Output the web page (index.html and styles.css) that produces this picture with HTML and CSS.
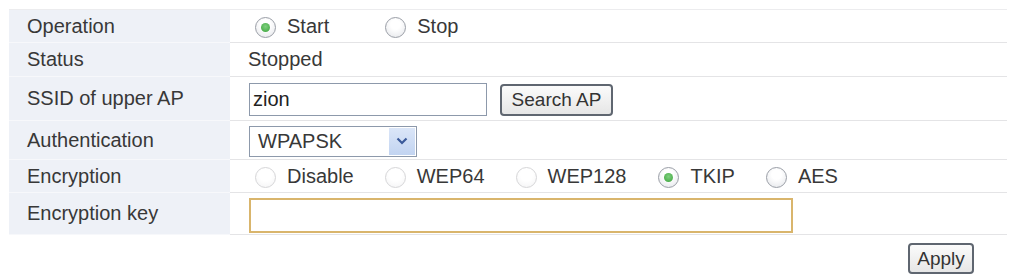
FILE: index.html
```html
<!DOCTYPE html>
<html lang="en">
<head>
    <meta charset="UTF-8">
    <meta name="viewport" content="width=device-width, initial-scale=1.0">
    <title>Repeater Settings</title>
    <link rel="stylesheet" href="styles.css">
</head>
<body>
    <div class="settings">
        <div class="row row-op">
            <div class="label">Operation</div>
            <div class="value">
                <label class="option option-wide"><input type="radio" name="op" checked> Start</label>
                <label class="option"><input type="radio" name="op"> Stop</label>
            </div>
        </div>
        <div class="row row-status">
            <div class="label">Status</div>
            <div class="value"><span class="status-text">Stopped</span></div>
        </div>
        <div class="row row-ssid">
            <div class="label">SSID of upper AP</div>
            <div class="value">
                <input class="text-input ssid-input" type="text" value="zion">
                <button class="btn search-btn">Search AP</button>
            </div>
        </div>
        <div class="row row-auth">
            <div class="label">Authentication</div>
            <div class="value">
                <div class="select">
                    <span class="select-text">WPAPSK</span>
                    <span class="select-arrow">
                        <svg width="12" height="8" viewBox="0 0 12 8"><path d="M1.5 1.5 L6 6 L10.5 1.5" fill="none" stroke="#3b5a9a" stroke-width="2.2"/></svg>
                    </span>
                </div>
            </div>
        </div>
        <div class="row row-enc">
            <div class="label">Encryption</div>
            <div class="value">
                <label class="option"><input type="radio" name="enc" disabled> Disable</label>
                <label class="option"><input type="radio" name="enc" disabled> WEP64</label>
                <label class="option"><input type="radio" name="enc" disabled> WEP128</label>
                <label class="option"><input type="radio" name="enc" checked> TKIP</label>
                <label class="option"><input type="radio" name="enc"> AES</label>
            </div>
        </div>
        <div class="row row-key">
            <div class="label">Encryption key</div>
            <div class="value">
                <input class="text-input key-input" type="text" value="">
            </div>
        </div>
    </div>
    <div class="actions">
        <button class="btn apply-btn">Apply</button>
    </div>
</body>
</html>
```

FILE: styles.css
```css
body {
    font-family: "Liberation Sans", Arial, sans-serif;
    font-size: 20px;
    color: #383838;
    margin: 0;
    padding: 9px 10px 0 9px;
    background: #fff;
}

.settings {
    border-top: 1px solid #ececee;
}

.row {
    display: grid;
    grid-template-columns: 221px 1fr;
}

.row-op { height: 33px; }
.row-status { height: 34px; }
.row-ssid { height: 44px; }
.row-auth { height: 39px; }
.row-enc { height: 33px; }
.row-key { height: 42px; }

.label {
    background-color: #eef1f7;
    border-bottom: 1px solid #f7f8fb;
    padding-left: 18px;
    display: flex;
    align-items: center;
}

.value {
    display: flex;
    align-items: center;
    padding-left: 19px;
    border-bottom: 1px solid #e4e4e6;
}

.row-op .value,
.row-enc .value {
    padding-left: 25px;
}

.status-text {
    margin-left: -1px;
}

.option {
    display: flex;
    align-items: center;
    margin-right: 31px;
    line-height: 1;
}

.option-wide {
    margin-right: 56px;
}

.option input {
    appearance: none;
    -webkit-appearance: none;
    width: 21px;
    height: 21px;
    margin: 0 11px 0 0;
    border: 1px solid #9a9ea6;
    border-radius: 50%;
    background: radial-gradient(circle at 50% 35%, #ffffff 30%, #e2e4e8 100%);
    position: relative;
    top: 1px;
}

.option input:checked::after {
    content: "";
    position: absolute;
    left: 5px;
    top: 5px;
    width: 9px;
    height: 9px;
    border-radius: 50%;
    background: radial-gradient(circle at 50% 40%, #7fd07f 0%, #3aa33a 100%);
}

.option input:disabled {
    border-color: #d6d6d8;
    background: radial-gradient(circle at 50% 35%, #ffffff 40%, #f2f2f3 100%);
}

.row-enc .option:nth-child(3) {
    margin-right: 32px;
}

.text-input {
    font-family: inherit;
    font-size: 20px;
    color: #222;
    box-sizing: border-box;
    margin: 0;
    padding: 0 3px;
    outline: none;
}

.ssid-input {
    width: 238px;
    height: 33px;
    border: 1px solid #8d99ab;
    margin-top: 2px;
}

.key-input {
    width: 544px;
    height: 35px;
    border: 2px solid #d9b56c;
    margin-top: 3px;
}

.select {
    width: 168px;
    height: 31px;
    box-sizing: border-box;
    border: 1px solid #8d99ab;
    display: flex;
    align-items: center;
    justify-content: space-between;
    margin-top: 2px;
}

.select-text {
    padding-left: 8px;
}

.select-arrow {
    width: 26px;
    height: 27px;
    margin-right: 1px;
    background: linear-gradient(#dbe6f8, #c2d4f1);
    display: flex;
    align-items: center;
    justify-content: center;
}

.btn {
    font-family: inherit;
    font-size: 19px;
    color: #333;
    background: linear-gradient(#fbfbfb, #e6e6e6);
    border: 2px solid #5f6670;
    border-radius: 4px;
    box-sizing: border-box;
    padding: 0;
    cursor: pointer;
}

.search-btn {
    width: 113px;
    height: 32px;
    margin-left: 13px;
    margin-top: 2px;
}

.actions {
    display: flex;
    justify-content: flex-end;
    padding-right: 33px;
    margin-top: 8px;
}

.apply-btn {
    width: 66px;
    height: 31px;
}
```
